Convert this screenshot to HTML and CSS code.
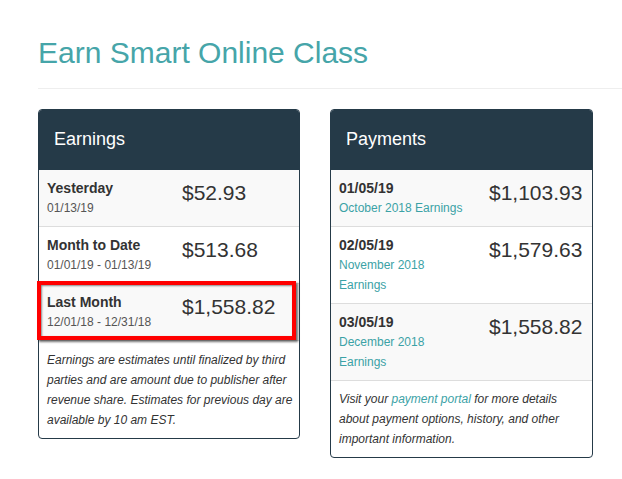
FILE: index.html
```html
<!DOCTYPE html>
<html lang="en">
<head>
    <meta charset="UTF-8">
    <meta name="viewport" content="width=device-width, initial-scale=1.0">
    <title>Earn Smart Online Class</title>
    <link rel="stylesheet" href="styles.css">
</head>
<body>
    <div class="page">
        <h1 class="title">Earn Smart Online Class</h1>
        <hr class="divider">

        <div class="panels">
            <!-- Earnings -->
            <div class="panel earnings">
                <div class="panel-head">Earnings</div>

                <div class="row striped">
                    <div class="cell">
                        <div class="label">Yesterday</div>
                        <div class="date">01/13/19</div>
                    </div>
                    <div class="cell amount">$52.93</div>
                </div>

                <div class="row">
                    <div class="cell">
                        <div class="label">Month to Date</div>
                        <div class="date">01/01/19 - 01/13/19</div>
                    </div>
                    <div class="cell amount">$513.68</div>
                </div>

                <div class="row striped highlighted">
                    <div class="cell">
                        <div class="label">Last Month</div>
                        <div class="date">12/01/18 - 12/31/18</div>
                    </div>
                    <div class="cell amount">$1,558.82</div>
                    <div class="callout"></div>
                </div>

                <p class="note">Earnings are estimates until finalized by third parties and are amount due to publisher after revenue share. Estimates for previous day are available by 10 am EST.</p>
            </div>

            <!-- Payments -->
            <div class="panel payments">
                <div class="panel-head">Payments</div>

                <div class="row striped">
                    <div class="cell">
                        <div class="label">01/05/19</div>
                        <a class="period" href="#">October 2018 Earnings</a>
                    </div>
                    <div class="cell amount">$1,103.93</div>
                </div>

                <div class="row">
                    <div class="cell">
                        <div class="label">02/05/19</div>
                        <a class="period" href="#">November 2018 Earnings</a>
                    </div>
                    <div class="cell amount">$1,579.63</div>
                </div>

                <div class="row striped">
                    <div class="cell">
                        <div class="label">03/05/19</div>
                        <a class="period" href="#">December 2018 Earnings</a>
                    </div>
                    <div class="cell amount">$1,558.82</div>
                </div>

                <p class="note">Visit your <a href="#">payment portal</a> for more details about payment options, history, and other important information.</p>
            </div>
        </div>
    </div>
</body>
</html>
```

FILE: styles.css
```css
body {
    margin: 0;
    font-family: 'Liberation Sans', Arial, sans-serif;
    color: #333;
    background-color: #fff;
}

.page {
    padding-left: 38px;
}

.title {
    margin: 36px 0 0;
    font-size: 30px;
    line-height: 33px;
    font-weight: normal;
    color: #46a5a9;
}

.divider {
    margin: 19px 0 20px;
    border: none;
    border-top: 1px solid #eee;
}

.panels {
    display: flex;
    align-items: flex-start;
    gap: 30px;
}

.panel {
    border: 1px solid #253a48;
    border-radius: 4px;
    background-color: #fff;
}

.earnings {
    width: 260px;
}

.payments {
    width: 261px;
}

.panel-head {
    background-color: #253a48;
    color: #fff;
    font-size: 18px;
    line-height: 20px;
    padding: 19px 15px 21px;
    border-radius: 3px 3px 0 0;
}

/* table rows */
.row {
    display: grid;
    border-bottom: 1px solid #ddd;
}

.earnings .row {
    grid-template-columns: 135px 1fr;
}

.payments .row {
    grid-template-columns: 150px 1fr;
}

.striped {
    background-color: #f9f9f9;
}

.cell {
    padding: 8px;
}

.label {
    font-size: 14px;
    line-height: 20px;
    font-weight: bold;
    color: #333;
}

.date {
    font-size: 12px;
    line-height: 20px;
    color: #555;
}

.period {
    display: block;
    font-size: 12px;
    line-height: 20px;
    color: #3ba2a6;
    text-decoration: none;
}

.amount {
    font-size: 21px;
    line-height: 30px;
    color: #333;
}

.note {
    margin: 0;
    padding: 8px 4px 8px 8px;
    font-size: 12px;
    line-height: 20px;
    font-style: italic;
    color: #333;
}

.earnings .note {
    padding-top: 9px;
}

.note a {
    color: #3ba2a6;
    text-decoration: none;
}

/* red annotation box over the last month row */
.highlighted {
    position: relative;
}

.callout {
    position: absolute;
    top: -3px;
    left: -2px;
    right: 3px;
    height: 51px;
    border: 4px solid #f00;
    box-shadow: 2px 2px 2px rgba(0, 0, 0, 0.55), inset 1px 1px 2px rgba(0, 0, 0, 0.45);
}
```
